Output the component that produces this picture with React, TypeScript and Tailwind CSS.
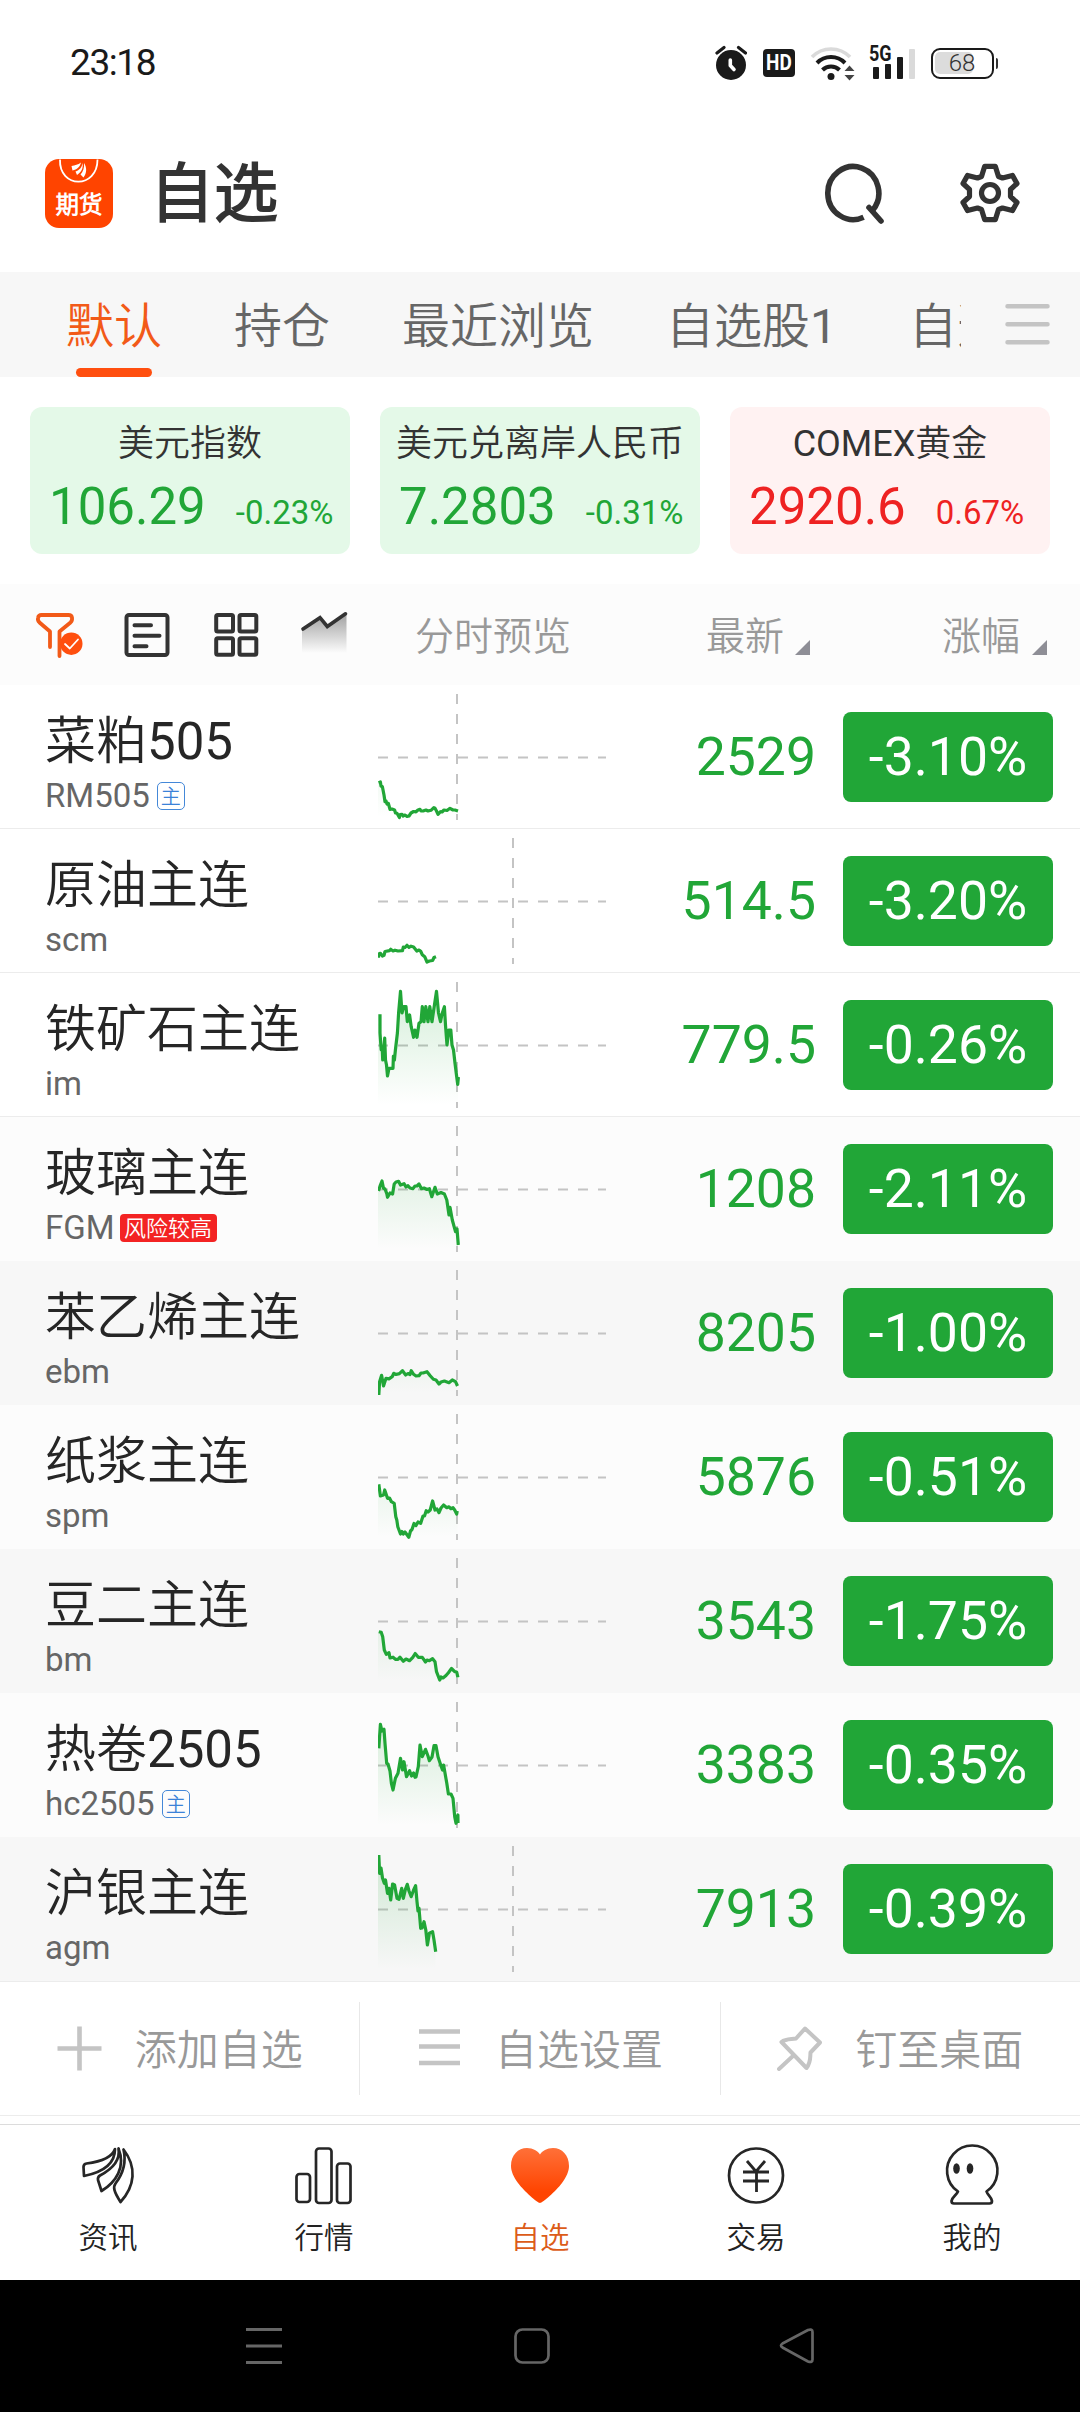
import React from "react";

type Point = [number, number];

interface Quote {
  name: string;
  code: string;
  tag?: "main" | "risk";
  price: string;
  change: string;
  rowClass: string;
  split: number;
  end: number;
  points: Point[];
}

const GREEN = "#21a637";

const quotes: Quote[] = [
  {
    name: "菜粕505", code: "RM505", tag: "main", price: "2529", change: "-3.10%",
    rowClass: "bg-white border-[#ececec]", split: 79, end: 79.5,
    points: [[0.5, 97.7], [2.4, 97], [3, 101], [4.4, 101.7], [6, 110], [7, 116.7], [8, 116], [9, 119], [10.3, 118.3], [12, 124.3], [14, 124], [16.6, 125], [17.5, 128], [19, 128.3], [21.4, 132.5], [22, 129.5], [24, 129.3], [25, 131], [27, 130], [29, 131.5], [31, 131], [33, 128], [35.6, 126.5], [38, 126.8], [40, 125], [42, 124.3], [43, 126], [45, 126], [48, 125], [50, 126], [53, 125.3], [55.8, 122.7], [57, 123.3], [58.5, 126], [60, 129.3], [62.5, 126.7], [64, 127], [66, 125], [69, 125.5], [72, 123.3], [75, 125], [77, 125], [80, 126]],
  },
  {
    name: "原油主连", code: "scm", price: "514.5", change: "-3.20%",
    rowClass: "bg-white border-[#ececec]", split: 135, end: 57,
    points: [[0.5, 128.7], [0.8, 125], [2.4, 124.3], [4.4, 127], [6, 126.3], [7, 122.5], [11.5, 121.7], [12.7, 120.3], [15, 122], [17, 121.2], [20, 122], [24.5, 121.7], [25.3, 118], [27, 118.5], [29, 116.3], [31, 118.3], [33, 117.2], [35.6, 118], [38.8, 122], [41, 121], [42.7, 122.3], [44.3, 125.7], [46.7, 127.7], [49, 133], [51.4, 132], [54.6, 131.5], [56, 128.5], [58, 127.7]],
  },
  {
    name: "铁矿石主连", code: "im", price: "779.5", change: "-0.26%",
    rowClass: "bg-white border-[#ececec]", split: 79, end: 80,
    points: [[2, 41.3], [2, 60], [3.2, 77], [4.2, 74], [4.7, 87], [6, 74], [6.7, 65], [7.5, 87], [8.5, 92], [9.5, 103], [11, 95.3], [15, 95.3], [15.4, 83], [16.4, 87], [17.4, 77], [19.4, 60], [20.6, 40], [22.5, 18.3], [24, 40], [25.7, 33.7], [28, 33.7], [29.3, 48.7], [31.6, 42], [33.2, 53.7], [35.6, 64.3], [37, 57], [39, 64.3], [41, 50.3], [43, 48.7], [44.3, 33.7], [46, 48.7], [47.8, 33.7], [50, 48.7], [51.8, 33.7], [54, 48.7], [56, 35], [58.5, 18.3], [60.5, 40], [62.5, 48.7], [64, 41], [66.4, 33.7], [67.6, 53.7], [69, 72], [70.8, 57], [72.8, 57], [74, 72], [75.5, 77], [77, 90.3], [78.7, 103.7], [79.7, 111.3], [80.4, 104]],
  },
  {
    name: "玻璃主连", code: "FGM", tag: "risk", price: "1208", change: "-2.11%",
    rowClass: "bg-[#fcfcfc] border-[#fcfcfc]", split: 79, end: 80,
    points: [[0.5, 74], [2.4, 68], [4, 64], [5.5, 71.3], [7, 72], [8.7, 76.3], [9.5, 80.3], [12, 76], [14.6, 77], [16.2, 67], [18, 65], [20.6, 64.3], [22.5, 68], [26, 66.7], [28, 70], [30, 68.7], [32, 71], [34.8, 71.7], [37, 69], [39, 69], [41, 67], [43.5, 71.7], [46, 71], [49, 72.5], [51.4, 71.7], [53.8, 79.7], [57, 70.3], [59.3, 77], [63, 75.5], [66.4, 77], [68.8, 83], [71, 98], [72, 90.3], [74.3, 103], [77.5, 114.7], [79, 112], [80.3, 128]],
  },
  {
    name: "苯乙烯主连", code: "ebm", price: "8205", change: "-1.00%",
    rowClass: "bg-[#f7f7f7] border-[#f7f7f7]", split: 79, end: 79.5,
    points: [[0.8, 134], [1.6, 120.7], [3.6, 114.3], [5.5, 125], [8, 117.3], [11, 117.8], [14.2, 115.7], [15.8, 112.3], [18, 113.5], [21.4, 112.6], [24.5, 109.7], [27.7, 114], [30, 112.5], [32, 113.5], [33.2, 109.7], [35.6, 113.3], [38, 115], [41, 114.7], [43, 112], [45, 112], [49, 110.7], [52.2, 114.7], [55.4, 118.3], [58, 119], [61, 123], [63, 121], [66.4, 120], [71, 121.7], [74.3, 119], [77.5, 120.7], [79.5, 125]],
  },
  {
    name: "纸浆主连", code: "spm", price: "5876", change: "-0.51%",
    rowClass: "bg-[#fcfcfc] border-[#fcfcfc]", split: 79, end: 79.5,
    points: [[0.8, 79.3], [2.4, 91], [5.5, 90], [6.7, 85], [9.5, 93.3], [11.5, 93], [13.4, 96.7], [16.2, 98.3], [17.8, 111.7], [18.8, 115], [19.8, 121.7], [22.5, 129], [24, 126.5], [25.3, 129], [27, 127], [30.8, 132.3], [32.5, 126], [34, 124.5], [36, 118.5], [38, 120.5], [40, 117], [42.7, 118.3], [45, 111], [46.5, 111], [48.2, 105.7], [50, 107], [52.2, 105], [54.6, 96], [57, 105], [59, 104], [61, 107.7], [63, 103], [65.6, 100], [68.8, 102.7], [71, 101.8], [72.8, 103.7], [75, 102.7], [76.7, 105], [78.7, 109], [79.2, 106]],
  },
  {
    name: "豆二主连", code: "bm", price: "3543", change: "-1.75%",
    rowClass: "bg-[#f7f7f7] border-[#f7f7f7]", split: 79, end: 80,
    points: [[0.8, 82.7], [3.2, 83.3], [4.7, 87.7], [6.3, 101], [8.3, 105.3], [11, 103.7], [12, 109], [15, 108.2], [17.4, 110.3], [20, 110.3], [22, 108.2], [25.3, 112.3], [28, 110], [31.6, 111.7], [34.8, 108.3], [37.2, 104.5], [40.3, 108.3], [44.3, 108.3], [47.5, 113], [49, 111], [51.4, 111.7], [54.6, 109.7], [57, 112.7], [58.5, 122.7], [61.7, 131], [63, 128], [65, 129], [68, 126.5], [70.4, 123.7], [73.5, 119.5], [76.7, 122.7], [78.7, 123], [79.9, 128.3]],
  },
  {
    name: "热卷2505", code: "hc2505", tag: "main", price: "3383", change: "-0.35%",
    rowClass: "bg-[#fcfcfc] border-[#fcfcfc]", split: 79, end: 80,
    points: [[0.8, 55.3], [2.4, 31.3], [4, 38], [6, 36.3], [7, 50.3], [8.7, 70.3], [10, 71], [12, 78], [13.4, 90.3], [15, 97], [17.4, 85.3], [20, 80.3], [22.5, 65.3], [24.5, 77], [26, 68.7], [28.5, 83.7], [31.6, 77.7], [33.5, 83], [35.6, 80], [37, 84.3], [38, 84], [40.3, 73.7], [42, 52], [44.3, 63.7], [47.5, 56.3], [50, 63], [51.4, 67.7], [54, 64], [56, 52.7], [58, 52.7], [60, 63.7], [63.3, 73.7], [64.5, 77], [65.6, 72], [68.8, 90.3], [70.4, 101], [73, 101], [75, 105.3], [76.7, 123.7], [78, 130.3], [79.9, 122], [80, 130]],
  },
  {
    name: "沪银主连", code: "agm", price: "7913", change: "-0.39%",
    rowClass: "bg-[#f7f7f7] border-[#f7f7f7]", split: 135, end: 57.5,
    points: [[0.8, 18], [1.6, 36.3], [3, 31], [4.5, 41], [6.3, 46.3], [7.5, 43], [9.5, 56.3], [11, 51.3], [12.7, 63], [14.6, 47], [16.6, 48], [19, 61.3], [21, 62.3], [23.7, 51.3], [25.3, 61.3], [27.5, 52], [29.3, 47.3], [31, 54], [33.2, 59.7], [35.6, 53], [37.6, 48.7], [39, 64.7], [40, 74], [41, 71.3], [42.7, 91.3], [44, 91], [46, 84.7], [47.8, 93], [49.4, 108], [51.4, 96.3], [54.6, 94.7], [56, 103], [57.7, 114.7]],
  },
];

const indexes = [
  { name: "美元指数", value: "106.29", change: "-0.23%", box: "bg-[#e4f9e8]", color: "text-[#21a637]" },
  { name: "美元兑离岸人民币", value: "7.2803", change: "-0.31%", box: "bg-[#e4f9e8]", color: "text-[#21a637]" },
  { name: "COMEX黄金", value: "2920.6", change: "0.67%", box: "bg-[#fff2f2]", color: "text-[#ee2222]" },
];

function StatusBar() {
  return (
    <header className="flex h-[124px] shrink-0 items-center justify-between pl-[70px] pr-[82px] pt-0.5 text-[#1a1a1a]">
      <span className="text-[37px] leading-[44px] tracking-[-1.4px]">23:18</span>
      <div className="flex items-center">
        <svg className="h-[36px] w-[32px]" viewBox="0 0 32 36" fill="none">
          <circle cx="16" cy="20" r="15" fill="#1a1a1a" />
          <path d="M2 8 L9 2.5 M23.500 2.500 L30.500 8" stroke="#1a1a1a" strokeWidth="3.200" strokeLinecap="round" />
          <path d="M15.300 15 V20.500 L19 24.500" stroke="#fff" strokeWidth="3.600" strokeLinecap="round" strokeLinejoin="round" />
        </svg>
        <div className="ml-4 flex h-[28px] w-[32px] items-center justify-center rounded-[4px] bg-[#1a1a1a]">
          <span className="scale-x-[.86] text-[22px] font-bold leading-none text-white">HD</span>
        </div>
        <svg className="ml-[15px] h-[36px] w-[46px]" viewBox="0 0 46 36" fill="none">
          <path d="M2 12 A26.500 26.500 0 0 1 40 12" stroke="#dadada" strokeWidth="3.600" />
          <path d="M7 18 A19.500 19.500 0 0 1 35 18" stroke="#1a1a1a" strokeWidth="4" />
          <path d="M12.500 25 A12 12 0 0 1 29.500 25" stroke="#1a1a1a" strokeWidth="4" />
          <circle cx="21" cy="31.500" r="3.500" fill="#1a1a1a" />
          <path d="M34.500 26 L39.500 20.500 L44.500 26Z M34.500 30 L39.500 35.500 L44.500 30Z" fill="#444" />
        </svg>
        <div className="relative ml-[13px] h-[36px] w-[47px]">
          <span className="absolute left-0 top-0 origin-left scale-x-[.82] text-[22px] font-bold leading-[17px]">5G</span>
          <svg className="h-full w-full" viewBox="0 0 47 36">
            <rect x="4" y="22" width="6" height="12" rx="1" fill="#1a1a1a" />
            <rect x="16" y="19" width="6" height="15" rx="1" fill="#1a1a1a" />
            <rect x="28" y="12" width="6" height="22" rx="1" fill="#1a1a1a" />
            <rect x="40" y="4" width="6" height="30" rx="1" fill="#dadada" />
          </svg>
        </div>
        <div className="ml-[15px] flex items-center gap-[2px]">
          <div className="relative flex h-[31px] w-[63px] items-center justify-center rounded-[9px] border-[2.500px] border-[#1a1a1a]">
            <div className="absolute left-[2px] top-[2px] h-[22px] w-[38px] rounded-[5px] bg-[#dcdcdc]" />
            <span className="relative text-[24px] font-light leading-none text-[#333]">68</span>
          </div>
          <div className="h-[11px] w-[2.500px] rounded-r bg-[#333]" />
        </div>
      </div>
    </header>
  );
}

function AppLogo() {
  return (
    <div className="relative flex h-[69px] w-[68px] items-end justify-center rounded-[14px] bg-[#ff4400]">
      <svg className="absolute inset-0 h-full w-full" viewBox="0 0 68 69" fill="none">
        <path d="M15 0.500 C14 30 52.500 30 52.500 0.500" stroke="#fff" strokeWidth="1.800" />
        <path d="M36 3.500 C33 6 30 6 26.500 7 L27.500 11.500 C32 10.500 35 8 36 3.500Z" fill="#fff" />
        <path d="M37.500 4 C37 8.500 34.500 11 30.500 12.500 L32 16 C36.500 13 38.500 9 37.500 4Z" fill="#fff" />
        <path d="M39 4 C39.500 9 38 12.500 35.500 15.500 L38.500 18.500 C42 14 42 8.500 39 4Z" fill="#fff" />
      </svg>
      <span className="mb-[11px] text-[23.500px] font-black leading-[24px] text-white">期货</span>
    </div>
  );
}

function TitleBar() {
  return (
    <div className="flex h-[148px] shrink-0 items-center pb-[10px] pl-[45px]">
      <AppLogo />
      <h1 className="ml-[37px] mt-[3px] text-[64px] font-bold leading-[72px] text-[#333]">自选</h1>
      <svg className="ml-auto mr-[73px] h-[64px] w-[64px]" viewBox="0 0 64 64" fill="none" stroke="#333" strokeWidth="5.600">
        <path d="M42.600 56.300 A25.500 26.500 0 1 1 51.500 49.500" />
        <path d="M48 46.500 L60 60" strokeLinecap="round" />
      </svg>
      <svg className="mr-[58px] h-[64px] w-[64px]" viewBox="-32 -32 64 64" fill="none" stroke="#333" strokeWidth="5.200" strokeLinejoin="round">
        <path d="M-5.300 -26.700 H5.300 L8.500 -16.500 L12.500 -15 L22.400 -17.600 L27 -9.500 L20.500 -3.500 V3.500 L27 9.500 L22.400 17.600 L12.500 15 L8.500 16.500 L5.300 26.700 H-5.300 L-8.500 16.500 L-12.500 15 L-22.400 17.600 L-27 9.500 L-20.500 3.500 V-3.500 L-27 -9.500 L-22.400 -17.600 L-12.500 -15 L-8.500 -16.500 Z" />
        <circle r="8.500" />
      </svg>
    </div>
  );
}

function Tabs() {
  return (
    <nav className="flex h-[105px] shrink-0 bg-[#f7f7f7]">
      <div className="flex w-[961px] gap-[72px] overflow-hidden whitespace-nowrap pl-[66px] text-[48px] leading-[110px] text-[#666]">
        <div className="relative h-[105px] shrink-0 text-[#f25a18]">
          默认
          <span className="absolute bottom-0 left-[10px] h-[9px] w-[76px] rounded-full bg-[#ff4f0f]" />
        </div>
        <span className="shrink-0">持仓</span>
        <span className="shrink-0">最近浏览</span>
        <span className="shrink-0">自选股1</span>
        <span className="shrink-0">自选股2</span>
      </div>
      <svg className="ml-[44px] mt-[32px] h-[41px] w-[45px]" viewBox="0 0 45 41" stroke="#c4c4c4" strokeWidth="4.500" strokeLinecap="round">
        <path d="M2.500 2.300 H42.500 M2.500 20.300 H42.500 M2.500 38.300 H42.500" />
      </svg>
    </nav>
  );
}

function IndexCards() {
  return (
    <section className="grid h-[207px] shrink-0 grid-cols-3 gap-[30px] p-[30px]">
      {indexes.map((item) => (
        <div key={item.name} className={`h-[147px] rounded-[12px] ${item.box}`}>
          <div className="pt-[13px] text-center text-[36px] leading-[48px] text-[#333]">{item.name}</div>
          <div className={`mt-[9px] flex items-baseline gap-[30px] pl-[19px] leading-[60px] ${item.color}`}>
            <span className="text-[51px]">{item.value}</span>
            <span className="text-[33px]">{item.change}</span>
          </div>
        </div>
      ))}
    </section>
  );
}

function SortArrow() {
  return (
    <svg className="h-[15px] w-[15px]" viewBox="0 0 15 15">
      <path d="M15 0 V15 H0Z" fill="#8e8e96" />
    </svg>
  );
}

function ListHeader() {
  return (
    <div className="flex h-[101px] shrink-0 items-center bg-[#fcfcfc] pl-[34px] text-[39px] leading-[48px] text-[#999]">
      <svg className="h-[48px] w-[50px]" viewBox="34 612 50 48" fill="none" stroke="#f25a18" strokeWidth="3.800" strokeLinejoin="round" strokeLinecap="round">
        <path d="M50 648 V632.500 L39.500 623.500 Q37.500 621.500 38 619 Q38.500 616 41.500 616 H68.500 Q71.500 616 72 618.500 Q72.500 621.500 70.500 623.500 L59.500 632.500 V657" />
        <circle cx="71.300" cy="644.700" r="11.200" fill="#ff4f0f" stroke="none" />
        <path d="M65 645 L69.800 649.500 L78 640.500" stroke="#fff" strokeWidth="1.800" />
      </svg>
      <svg className="ml-[38px] h-[48px] w-[50px]" viewBox="122 612 50 48" fill="none" stroke="#333" strokeWidth="4" strokeLinecap="round">
        <rect x="126.500" y="616" width="41" height="40" rx="2.500" />
        <path d="M134.500 626.300 H151 M134.500 636.700 H159.500 M134.500 647.300 H146.500" />
      </svg>
      <svg className="ml-[40px] h-[48px] w-[48px]" viewBox="212 612 48 48" fill="none" stroke="#333" strokeWidth="4">
        <rect x="216.200" y="616" width="16.800" height="16.500" rx="1.500" />
        <rect x="239.500" y="616" width="16.800" height="16.500" rx="1.500" />
        <rect x="216.200" y="639.300" width="16.800" height="16.500" rx="1.500" />
        <rect x="239.500" y="639.300" width="16.800" height="16.500" rx="1.500" />
      </svg>
      <svg className="ml-[39px] h-[48px] w-[50px]" viewBox="300 612 50 48" fill="none">
        <defs>
          <linearGradient id="trendFade" x1="0" y1="0" x2="0" y2="1">
            <stop offset="0" stopColor="#333" stopOpacity="0.450" />
            <stop offset="1" stopColor="#333" stopOpacity="0" />
          </linearGradient>
        </defs>
        <path d="M303 630.500 L321 618.700 L328.300 628 L347.500 615 V654 H303Z" fill="url(#trendFade)" />
        <path d="M304 630 L321 618.700 L328.300 627.500 L346.500 614.800" stroke="#333" strokeWidth="3.600" strokeLinecap="round" />
      </svg>
      <span className="ml-[66px] pt-[5px]">分时预览</span>
      <div className="ml-auto flex items-center gap-[11px]">
        <span className="pt-[5px]">最新</span>
        <div className="pt-[25px]"><SortArrow /></div>
      </div>
      <div className="ml-[132px] mr-[33px] flex items-center gap-[12px]">
        <span className="pt-[5px]">涨幅</span>
        <div className="pt-[25px]"><SortArrow /></div>
      </div>
    </div>
  );
}

function MiniChart({ id, split, end, points }: { id: string; split: number; end: number; points: Point[] }) {
  const line = points.map(([x, y]) => `${x},${y}`).join(" ");
  const last = points[points.length - 1];
  return (
    <svg className="h-[143px] w-[230px] shrink-0" viewBox="0 0 230 143" fill="none">
      <defs>
        <linearGradient id={id} gradientUnits="userSpaceOnUse" x1="0" y1="10" x2="0" y2="132">
          <stop offset="0" stopColor={GREEN} stopOpacity="0.200" />
          <stop offset="1" stopColor={GREEN} stopOpacity="0" />
        </linearGradient>
      </defs>
      <path d="M0 72.500 H228" stroke="#c4c4c4" strokeWidth="2" strokeDasharray="10 10" />
      <path d={`M${split} 9 V135`} stroke="#c4c4c4" strokeWidth="2" strokeDasharray="10 10" />
      <polygon points={`0,132 0,${points[0][1]} ${line} ${end},${last[1]} ${end},132`} fill={`url(#${id})`} />
      <polyline points={line} stroke={GREEN} strokeWidth="3.200" strokeLinejoin="round" />
    </svg>
  );
}

function QuoteRow({ quote, index }: { quote: Quote; index: number }) {
  return (
    <div className={`flex h-[144px] shrink-0 items-center border-b pl-[45px] pr-[27px] ${quote.rowClass}`}>
      <div className="flex h-full w-[333px] shrink-0 flex-col pt-[27px]">
        <span className="text-[51px] leading-[60px] text-[#262626]">{quote.name}</span>
        <div className="flex h-[48px] items-center text-[33px] leading-[48px] text-[#666]">
          <span>{quote.code}</span>
          {quote.tag === "main" && (
            <span className="ml-[7px] flex h-[28px] w-[28px] items-center justify-center rounded-[5px] border-[1.500px] border-[#4488d8] pt-px text-[20px] leading-none text-[#3b82d8]">主</span>
          )}
          {quote.tag === "risk" && (
            <span className="ml-[5px] flex h-[28px] w-[97px] items-center justify-center rounded-[4px] bg-[#f32323] pt-px text-[22px] leading-none text-white">风险较高</span>
          )}
        </div>
      </div>
      <MiniChart id={`fade${index}`} split={quote.split} end={quote.end} points={quote.points} />
      <span className="ml-auto text-[53.500px] leading-[64px] text-[#21a637]">{quote.price}</span>
      <span className="ml-[27px] flex h-[90px] w-[210px] items-center justify-center rounded-[8px] bg-[#21a637] text-[53.500px] leading-[64px] text-white">{quote.change}</span>
    </div>
  );
}

function Actions() {
  const cell = "flex flex-1 items-center justify-center gap-[33px]";
  return (
    <div className="flex h-[135px] shrink-0 items-center border-y border-[#ececec] text-[42px] leading-[60px] text-[#999]">
      <div className={cell}>
        <svg className="h-[45px] w-[45px]" viewBox="0 0 45 45" stroke="#c4c4c4" strokeWidth="4.600">
          <path d="M0.500 22.500 H44.500 M22.500 0.500 V44.500" />
        </svg>
        <span className="pt-[5px]">添加自选</span>
      </div>
      <div className="h-[93px] w-px bg-[#e8e8e8]" />
      <div className={cell}>
        <svg className="h-[45px] w-[45px]" viewBox="0 0 45 45" stroke="#c4c4c4" strokeWidth="4.500">
          <path d="M2 5.500 H43 M2 20.500 H43 M2 37 H43" />
        </svg>
        <span className="pt-[5px]">自选设置</span>
      </div>
      <div className="h-[93px] w-px bg-[#e8e8e8]" />
      <div className={cell}>
        <svg className="h-[45px] w-[45px]" viewBox="0 0 45 45" fill="none" stroke="#c4c4c4" strokeWidth="4" strokeLinecap="round" strokeLinejoin="round">
          <path d="M28 2.500 L43 16.500 L33.500 26.500 C33 32 34 36 29.500 42 L4.500 16 C9 12.500 14 13.500 19 12.500Z M17 29 L2 43" />
        </svg>
        <span className="pt-[5px]">钉至桌面</span>
      </div>
    </div>
  );
}

const navIcons: Record<string, React.ReactNode> = {
  资讯: (
    <>
      <path d="M43 11 C41 17 34 23 14.500 25.500 Q11.500 26 11.500 29 L12 38 C27 35 43 28 43 11Z" />
      <path d="M46.500 10.500 C48 19 44 29 28 37.500 Q25.500 39 26 42 L29.500 53 C44 44 54 29 46.500 10.500Z" />
      <path d="M51.500 11.500 C54 22 53 33 43.500 45.500 C41 49 41.500 53 48.500 64 C63 48 65 29 51.500 11.500Z" />
    </>
  ),
  行情: (
    <>
      <rect x="8.500" y="36" width="13.500" height="28" rx="3" />
      <rect x="28" y="10.500" width="15.500" height="54.500" rx="3" />
      <rect x="49" y="25.500" width="13.500" height="39.500" rx="3" />
    </>
  ),
  自选: (
    <path d="M36 65 C33.500 65 20 53 14 45 C9.500 39 7 33 7 28 C7 17 14 10 23 10 C29 10 34 13 36 16.500 C38 13 43 10 49 10 C58 10 65 17 65 28 C65 33 62.500 39 58 45 C52 53 38.500 65 36 65Z" fill="url(#heart)" stroke="none" />
  ),
  交易: (
    <>
      <circle cx="36" cy="37.500" r="27" />
      <path d="M27 23 L36 33.500 L45 23 M23 34 H49 M23 43 H49 M36.500 33 V54" strokeWidth="2.800" />
    </>
  ),
  我的: (
    <>
      <path d="M22 53.500 A25.200 25.200 0 1 1 50.500 53.500 C51.500 57 55.500 59 56 63 Q56 65.500 53.500 65.500 H18 Q15.500 65.500 15.500 63 C16 59 20.500 57 22 53.500Z" />
      <ellipse cx="20.500" cy="30.500" rx="3.300" ry="5.300" fill="#262626" stroke="none" />
      <ellipse cx="34" cy="30.500" rx="3.300" ry="5.300" fill="#262626" stroke="none" />
    </>
  ),
};

function BottomNav() {
  return (
    <nav className="mt-2 grid h-[156px] shrink-0 grid-cols-5 border-t border-[#dcdcdc]">
      {Object.keys(navIcons).map((label) => (
        <div key={label} className="flex flex-col items-center pt-[13px]">
          <svg className="h-[72px] w-[72px]" viewBox="0 0 72 72" fill="none" stroke="#262626" strokeWidth="2.700" strokeLinejoin="round">
            <defs>
              <linearGradient id="heart" x1="0" y1="0" x2="0" y2="1">
                <stop offset="0" stopColor="#ff7038" />
                <stop offset="0.800" stopColor="#ff4400" />
              </linearGradient>
            </defs>
            {navIcons[label]}
          </svg>
          <span className={`mt-[5px] text-[29.500px] leading-[46px] ${label === "自选" ? "text-[#dc5c18]" : "text-[#222]"}`}>{label}</span>
        </div>
      ))}
    </nav>
  );
}

function SystemNav() {
  return (
    <div className="flex h-[132px] shrink-0 items-center bg-black pl-[246px]">
      <svg className="h-[40px] w-[36px]" viewBox="0 0 36 40" stroke="#666" strokeWidth="3">
        <path d="M0 3.500 H36 M0 20 H36 M0 36.500 H36" />
      </svg>
      <svg className="ml-[230px] h-[40px] w-[40px]" viewBox="0 0 40 40" fill="none" stroke="#666" strokeWidth="2.700">
        <rect x="3.500" y="3.500" width="33" height="33" rx="7" />
      </svg>
      <svg className="ml-[226px] h-[40px] w-[40px]" viewBox="0 0 40 40" fill="none" stroke="#666" strokeWidth="2.700" strokeLinejoin="round">
        <path d="M4.500 17.500 Q1.500 19.500 4.500 21.500 L30 35.500 Q34.500 37 34.500 33.500 V6 Q34.500 2.500 30 4Z" />
      </svg>
    </div>
  );
}

export default function App() {
  return (
    <main className="flex h-[2412px] w-[1080px] flex-col overflow-hidden bg-white font-[Roboto,'Noto_Sans_CJK_SC_DemiLight','Noto_Sans_CJK_SC',sans-serif]">
      <StatusBar />
      <TitleBar />
      <Tabs />
      <IndexCards />
      <ListHeader />
      {quotes.map((quote, index) => (
        <QuoteRow key={quote.code} quote={quote} index={index} />
      ))}
      <Actions />
      <BottomNav />
      <SystemNav />
    </main>
  );
}
